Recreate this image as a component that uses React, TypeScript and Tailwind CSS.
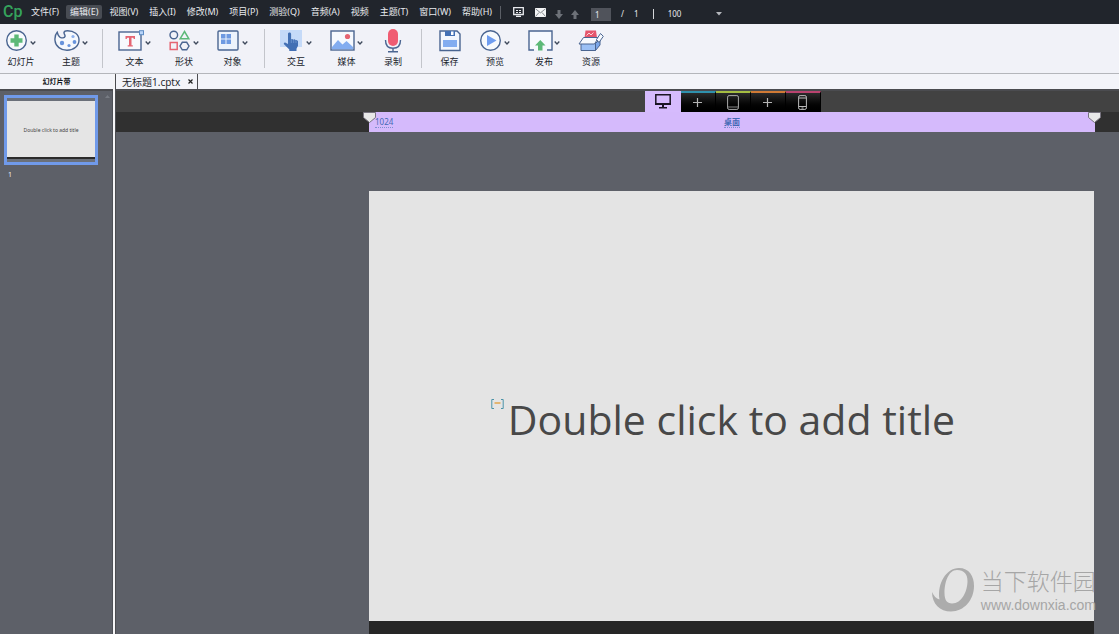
import { useState } from "react";
import type { ReactNode } from "react";
import clsx from "clsx";

const menus = [
  "文件(F)",
  "编辑(E)",
  "视图(V)",
  "插入(I)",
  "修改(M)",
  "项目(P)",
  "测验(Q)",
  "音频(A)",
  "视频",
  "主题(T)",
  "窗口(W)",
  "帮助(H)",
];

const uiFont = "font-['Noto_Sans','Noto_Sans_CJK_SC',sans-serif]";

interface Tool {
  label: string;
  icon: ReactNode;
  width: string;
  menu?: boolean;
}

const line = { fill: "none", stroke: "#4a6591", strokeWidth: 1.4 };

const toolGroups: Tool[][] = [
  [
    {
      label: "幻灯片",
      width: "w-[30px]",
      menu: true,
      icon: (
        <svg width="22" height="22" viewBox="0 0 22 22">
          <circle cx="10.5" cy="10.5" r="9.8" {...line} fill="#f7fafd" />
          <path d="M8.3 4.5h4.4v3.8h3.8v4.4h-3.8v3.8H8.3v-3.8H4.5V8.3h3.8z" fill="#5cb978" />
        </svg>
      ),
    },
    {
      label: "主题",
      width: "w-[34px]",
      menu: true,
      icon: (
        <svg width="26" height="22" viewBox="0 0 26 22">
          <path
            d="M3.2 2.200C1 4.500.8 8 1 10.500c.5 6 6 9.800 12 9.800 7 0 12-4.500 12-10.300S20 .8 13.500.8c-2 0-3.200.6-3.500 1.700-.3 1.300 1.500 2.500 1 4-.5 1.600-3 1.700-4.800.8C4.500 6.400 3.700 4.500 3.200 2.200z"
            {...line}
            fill="#f5f8fd"
          />
          <circle cx="8" cy="13" r="2.200" fill="#6793dc" />
          <circle cx="15" cy="15.500" r="1.600" fill="#6793dc" />
          <circle cx="20.500" cy="12" r="1.900" fill="#6793dc" />
          <circle cx="19" cy="6.500" r="1.600" fill="#8fb2ee" />
        </svg>
      ),
    },
  ],
  [
    {
      label: "文本",
      width: "w-[33px]",
      menu: true,
      icon: (
        <svg width="27" height="22" viewBox="0 0 27 22">
          <rect x="1" y="2" width="22" height="18" {...line} fill="#f7f9fd" />
          <path d="M7.500 6h9.500v3h-1.200l-.6-1.300h-1.700v7.600h1.300v1.200H9.700v-1.200H11V7.700H9.300L8.700 9H7.500z" fill="#e56572" />
          <rect x="21.500" y=".7" width="4" height="4" fill="#b9d4f8" stroke="#5d8cc4" />
        </svg>
      ),
    },
    {
      label: "形状",
      width: "w-[30px]",
      menu: true,
      icon: (
        <svg width="22" height="22" viewBox="0 0 22 22">
          <circle cx="4.800" cy="5" r="3.800" {...line} />
          <path d="M15.500 1.500l4.300 7.200h-8.600z" fill="none" stroke="#5cb978" strokeWidth="1.500" />
          <rect x="1.200" y="12.500" width="7" height="7" fill="none" stroke="#e56572" strokeWidth="1.500" />
          <path d="M13.300 12.300h4.400l2.300 3.700-2.300 3.800h-4.400L11 16z" {...line} />
        </svg>
      ),
    },
    {
      label: "对象",
      width: "w-[31px]",
      menu: true,
      icon: (
        <svg width="22" height="22" viewBox="0 0 22 22">
          <rect x="1" y="1" width="20" height="19" rx="1" {...line} fill="#edf3fc" />
          <path d="M4 4h4.500v4.500H4zM9.500 4H14v4.500H9.500zM4 9.500h4.500V14H4zM9.500 9.500H14V14H9.500z" fill="#6e9ae2" />
        </svg>
      ),
    },
  ],
  [
    {
      label: "交互",
      width: "w-[32px]",
      menu: true,
      icon: (
        <svg width="23" height="22" viewBox="0 0 23 22">
          <path d="M0 0h22v17H0z" fill="#c5daf8" />
          <path
            d="M9.500 2.500c1 0 1.600.7 1.600 1.600v5.200l1.200-.4 1 .8 1.400-.4 1 .9 1.200-.2 1.100 1.200v4.500l-1.500 3V21H9.300v-1.600L4 14.300c-.6-1 .4-2.300 1.600-1.600L8 14V4c0-1 .6-1.500 1.500-1.500z"
            fill="#4370b4"
          />
          <path d="M11.300 9.500V13M13.700 10v3M16 10.500V13" stroke="#8fb0e2" strokeWidth=".5" />
        </svg>
      ),
    },
    {
      label: "媒体",
      width: "w-[33px]",
      menu: true,
      icon: (
        <svg width="25" height="22" viewBox="0 0 25 22">
          <rect x="1" y="1" width="23" height="19" {...line} fill="#f6f9fe" />
          <path d="M2 17l6-7 4.500 4.500 4-3.500L23 17v2.300H2z" fill="#83adf0" />
          <circle cx="17.500" cy="6.500" r="2.600" fill="#e56572" />
        </svg>
      ),
    },
    {
      label: "录制",
      width: "w-6",
      icon: (
        <svg width="24" height="24" viewBox="0 0 24 24">
          <rect x="7" y="0" width="10" height="17" rx="5" fill="#f05c72" />
          <path d="M4.500 11c0 5.500 3 8.300 7.500 8.300s7.500-2.800 7.500-8.300M12 19.500v3M7 22.700h10" {...line} />
        </svg>
      ),
    },
  ],
  [
    {
      label: "保存",
      width: "w-[25px]",
      icon: (
        <svg width="22" height="22" viewBox="0 0 22 22">
          <path d="M1 1h17l3 3v16.500H1z" {...line} fill="#f2f6fd" />
          <path d="M6 1h10v5H6z" fill="#4370b4" />
          <path d="M12 1.500h2.500V5H12z" fill="#fff" />
          <path d="M4 10h14v7H4z" fill="#83adf0" />
        </svg>
      ),
    },
    {
      label: "预览",
      width: "w-[30px]",
      menu: true,
      icon: (
        <svg width="22" height="22" viewBox="0 0 22 22">
          <circle cx="10.500" cy="10.500" r="9.8" {...line} fill="#f7fafd" />
          <path d="M7 5l9.500 5.500L7 16z" fill="#6f9df0" />
        </svg>
      ),
    },
    {
      label: "发布",
      width: "w-8",
      menu: true,
      icon: (
        <svg width="25" height="22" viewBox="0 0 25 22">
          <path d="M6 20H1V1h23v19h-5" {...line} fill="#f6f9fe" />
          <path d="M12.300 10l5.200 5.500h-3V20.500H10V15.500H7z" fill="#5cb978" />
        </svg>
      ),
    },
    {
      label: "资源",
      width: "w-[26px]",
      icon: (
        <svg width="26" height="22" viewBox="0 0 26 22">
          <path d="M6.500 8l1-7.500h10.500L19 8z" fill="#e5566c" />
          <path d="M8.500 5.500L11 3l2 2 2.500-2.500" stroke="#fbd3d8" fill="none" />
          <path d="M3 13.500h14.500v7H3z" fill="#9bc0f5" stroke="#4a6591" />
          <path d="M17.500 13.500L22 9v6l-4.500 5.500z" fill="#7ba7ea" stroke="#4a6591" />
          <path d="M5.500 7.500h15l-4 6.500H1z" fill="#f7fafe" stroke="#4a6591" />
          <path d="M18.500 9.500L22.500 3.500l2.800 2.800-4.300 6.200z" fill="#f7fafe" stroke="#4a6591" />
        </svg>
      ),
    },
  ],
];

function Chevron() {
  return (
    <svg className="mt-1" width="6" height="6" viewBox="0 0 6 6">
      <path d="M.7 1.500L3 4l2.300-2.500" fill="none" stroke="#3f4a5c" strokeWidth="1.300" />
    </svg>
  );
}

function ToolButton({ tool }: { tool: Tool }) {
  return (
    <button className={clsx("flex flex-col items-center justify-start", tool.width)}>
      <span
        className={clsx("flex h-6 w-full shrink-0 items-center", tool.menu ? "justify-between" : "justify-center")}
      >
        {tool.icon}
        {tool.menu && <Chevron />}
      </span>
      <span className="mt-[3px] text-[9px] leading-3 whitespace-nowrap text-[#20242c]">{tool.label}</span>
    </button>
  );
}

function MenuBar() {
  const [page, setPage] = useState("1");

  return (
    <header className="flex h-6 items-center bg-[#21252c] text-[#e8eaee]">
      <span className="w-[27px] pl-[3px] font-['Liberation_Sans_Narrow','Roboto',sans-serif] text-[16px] leading-6 font-medium text-[#35a35c]">
        Cp
      </span>
      <nav className="flex gap-[3px]">
        {menus.map((menu, i) => (
          <button
            key={menu}
            className={clsx("px-1 text-[9px] leading-[14px] whitespace-nowrap", i === 1 && "rounded-xs bg-[#484c53]")}
          >
            {menu}
          </button>
        ))}
      </nav>
      <div className="ml-1 flex items-center border-l border-[#5b5f66] pl-3">
        <button aria-label="布局">
          <svg width="11" height="10" viewBox="0 0 11 10">
            <path d="M.7.7h9.600v6.800H.7zM3 9.300h5" fill="none" stroke="#e8eaee" strokeWidth="1.300" />
            <path d="M3 3h2v1H3zM6 3h2v1H6zM3 5h2v1H3zM6 5h2v1H6z" fill="#e8eaee" />
          </svg>
        </button>
        <button aria-label="邮件" className="ml-[11px]">
          <svg width="11" height="9" viewBox="0 0 11 9">
            <path d="M0 0h11v9H0z" fill="#f4f5f6" />
            <path d="M.5.8l5 4 5-4M.5 8.500L4 4.500M10.500 8.500L7 4.500" fill="none" stroke="#6a6e75" strokeWidth=".8" />
          </svg>
        </button>
        <button aria-label="下一张" className="ml-[9px] pt-1">
          <svg width="8" height="9" viewBox="0 0 8 9">
            <path d="M2.500 0h3v4H8L4 9 0 4h2.500z" fill="#6d7178" />
          </svg>
        </button>
        <button aria-label="上一张" className="ml-2 pt-1">
          <svg width="8" height="9" viewBox="0 0 8 9">
            <path d="M2.500 9h3V5H8L4 0 0 5h2.500z" fill="#6d7178" />
          </svg>
        </button>
      </div>
      <div className="mt-1 flex items-center text-[8px] leading-3">
        <input
          aria-label="页码"
          value={page}
          onChange={(e) => setPage(e.target.value)}
          className="ml-3 h-[13px] w-5 bg-[#50535b] px-1 outline-none"
        />
        <span className="ml-2.5">/</span>
        <span className="ml-2.5">1</span>
        <span className="ml-3.5 h-[10px] w-px bg-[#d5d7da]" />
        <label className="relative ml-3.5 flex items-center">
          <select aria-label="缩放" defaultValue="100" className="w-[54px] appearance-none bg-transparent outline-none">
            <option>50</option>
            <option>100</option>
            <option>200</option>
          </select>
          <svg className="pointer-events-none absolute right-0" width="6" height="4" viewBox="0 0 6 4">
            <path d="M0 0h6L3 3.500z" fill="#b4b7bc" />
          </svg>
        </label>
      </div>
    </header>
  );
}

function Toolbar() {
  return (
    <div className="flex h-[50px] border-b border-[#b4b6bb] bg-[#f1f2f8] py-[5px]">
      {toolGroups.map((group, i) => (
        <div
          key={i}
          className={clsx(
            "flex gap-[18px]",
            i === 0 ? "pr-3.5 pl-1.5" : "pr-4 pl-[15px]",
            i < toolGroups.length - 1 && "border-r border-[#c3c5cb]",
          )}
        >
          {group.map((tool) => (
            <ToolButton key={tool.label} tool={tool} />
          ))}
        </div>
      ))}
    </div>
  );
}

function SlidePanel() {
  return (
    <aside className="flex w-[113px] shrink-0 flex-col bg-[#5d6068]">
      <h2 className="h-[17px] border-b-2 border-[#4b4c50] bg-[#f3f4f9] text-center text-[7px] leading-4 font-bold text-[#16181c]">
        幻灯片带
      </h2>
      <div className="relative grow border-r border-[#4d5056] px-1 pt-1">
        <button className="flex h-[70px] w-[94px] flex-col border-[3px] border-[#709aea] bg-[#6b7079] py-[3px]">
          <span className="flex w-full grow items-center justify-center border-b-2 border-[#2b2b2b] bg-[#e5e5e5] pt-1 text-[5px] text-[#444]">
            Double click to add title
          </span>
        </button>
        <p className="mt-1 ml-1 text-[7px] leading-3 text-[#f0f0f0]">1</p>
        <svg className="absolute top-1 right-0.5" width="5" height="3" viewBox="0 0 5 3">
          <path d="M0 3h5L2.500 0z" fill="#777b83" />
        </svg>
      </div>
    </aside>
  );
}

function Plus() {
  return (
    <svg width="9" height="9" viewBox="0 0 9 9">
      <path d="M4.500 0v9M0 4.500h9" stroke="#b5b5b5" strokeWidth="1.200" />
    </svg>
  );
}

function DeviceTabs() {
  const tab = "flex w-[35px] items-center justify-center border-t-2 border-r border-r-black bg-linear-to-b from-[#2b2b2b] to-black";

  return (
    <div className="flex h-[21px] justify-center">
      <button aria-label="桌面" className="flex w-9 items-center justify-center bg-[#d6bbfd]">
        <svg width="16" height="15" viewBox="0 0 16 15">
          <path d="M.8.8h14.400v9.400H.8z" fill="none" stroke="#1b1523" strokeWidth="1.500" />
          <path d="M0 9h16v2H0zM7 11h2v2h3v1.500H4V13h3z" fill="#1b1523" />
        </svg>
      </button>
      <button aria-label="添加平板横向断点" className={clsx(tab, "border-t-[#2f91ad]")}>
        <Plus />
      </button>
      <button aria-label="平板" className={clsx(tab, "border-t-[#a5bd42]")}>
        <svg width="12" height="15" viewBox="0 0 12 15">
          <rect x=".6" y=".6" width="10.800" height="13.800" rx="1.500" fill="none" stroke="#aaa" />
          <path d="M1 12h10" stroke="#888" />
        </svg>
      </button>
      <button aria-label="添加手机横向断点" className={clsx(tab, "border-t-[#d07a35]")}>
        <Plus />
      </button>
      <button aria-label="手机" className={clsx(tab, "border-t-[#b9436f]")}>
        <svg width="9" height="15" viewBox="0 0 9 15">
          <rect x=".6" y=".6" width="7.800" height="13.800" rx="1.500" fill="none" stroke="#bbb" />
          <path d="M1 3h7M1 11.500h7M3.500 13h2" stroke="#bbb" />
        </svg>
      </button>
    </div>
  );
}

function Marker({ className }: { className: string }) {
  return (
    <svg className={clsx("absolute top-0", className)} width="13" height="12" viewBox="0 0 13 12">
      <path d="M.5.5h12v5l-6 5-6-5z" fill="#e8e8e8" stroke="#77737f" />
    </svg>
  );
}

function Watermark() {
  return (
    <div className="absolute right-[-2px] bottom-2 flex items-end gap-1.5 text-[#a6a6a6]">
      <svg width="43" height="46" viewBox="0 0 43 46">
        <path
          fillRule="evenodd"
          d="M27 1C37 1 42 9 42 19c0 14-10 25.500-23 25.500C8 44.500 0 37 0 25c2 4 4 6.500 7.500 7.500C5 17 14 1 27 1zM25 3c-9 0-12.500 13-12.500 23 0 7 2.500 10.500 7.500 10.500 10 0 15.500-12.500 15.500-22.500C35.500 7 32 3 25 3z"
          fill="#acacac"
        />
      </svg>
      <div>
        <p className="font-['Noto_Sans_CJK_SC',sans-serif] text-[23px] leading-[34px] font-light whitespace-nowrap">
          当下软件园
        </p>
        <p className="font-['Liberation_Sans',sans-serif] text-[14px] leading-4">www.downxia.com</p>
      </div>
    </div>
  );
}

function Workspace() {
  return (
    <main className="flex min-w-0 grow flex-col bg-[#5d6068]">
      <div className="flex h-[17px] border-b-2 border-[#4b4c50] bg-[#f3f4f9]">
        <div className="flex items-center gap-2 border-r border-[#4b4c50] pr-1 pl-1.5 text-[10px] leading-4 text-[#26282d]">
          <span className="whitespace-nowrap">无标题1.cptx</span>
          <button aria-label="关闭">
            <svg width="5" height="5" viewBox="0 0 5 5">
              <path d="M.5.5l4 4M4.500.5l-4 4" stroke="#222" strokeWidth="1.200" />
            </svg>
          </button>
        </div>
      </div>
      <div className="bg-[#424242] pr-6 pl-[254px]">
        <DeviceTabs />
      </div>
      <div className="bg-[#303030] pr-6 pl-[253px]">
        <div className="relative flex h-5 items-center justify-center bg-[#d5bafc] text-[8px] leading-[10px] text-[#4469b5]">
          <Marker className="-left-1.5" />
          <a href="#width" className="absolute left-1.5 border-b border-dotted border-[#7f8fd0]">
            1024
          </a>
          <a href="#desktop" className="border-b border-dotted border-[#7f8fd0] font-bold">
            桌面
          </a>
          <Marker className="-right-1.5" />
        </div>
      </div>
      <section className="flex grow flex-col pt-[59px] pr-[25px] pl-[253px]">
        <div className="relative flex h-[430px] items-center justify-center bg-[#e4e4e4] pt-[26px]">
          <div className="relative">
            <h1 className="font-['Open_Sans',sans-serif] text-[41px] leading-[56px] whitespace-nowrap text-[#484848]">
              Double click to add title
            </h1>
            <svg className="absolute top-2 right-full mr-1" width="13" height="10" viewBox="0 0 13 10">
              <path d="M3 .5H.8v9H3M10 .5h2.200v9H10" fill="none" stroke="#4b93a8" />
              <path d="M3.500 4h6" stroke="#e2a64c" strokeWidth="1.500" />
            </svg>
          </div>
          <Watermark />
        </div>
        <div className="min-h-3 grow bg-[#262626]" />
      </section>
    </main>
  );
}

export default function App() {
  return (
    <div className={clsx("flex min-h-screen flex-col overflow-hidden", uiFont)}>
      <MenuBar />
      <Toolbar />
      <div className="flex grow">
        <SlidePanel />
        <div className="w-[3px] shrink-0 border-r border-[#4b4c50] bg-[#f5f5f7]" />
        <Workspace />
      </div>
    </div>
  );
}
